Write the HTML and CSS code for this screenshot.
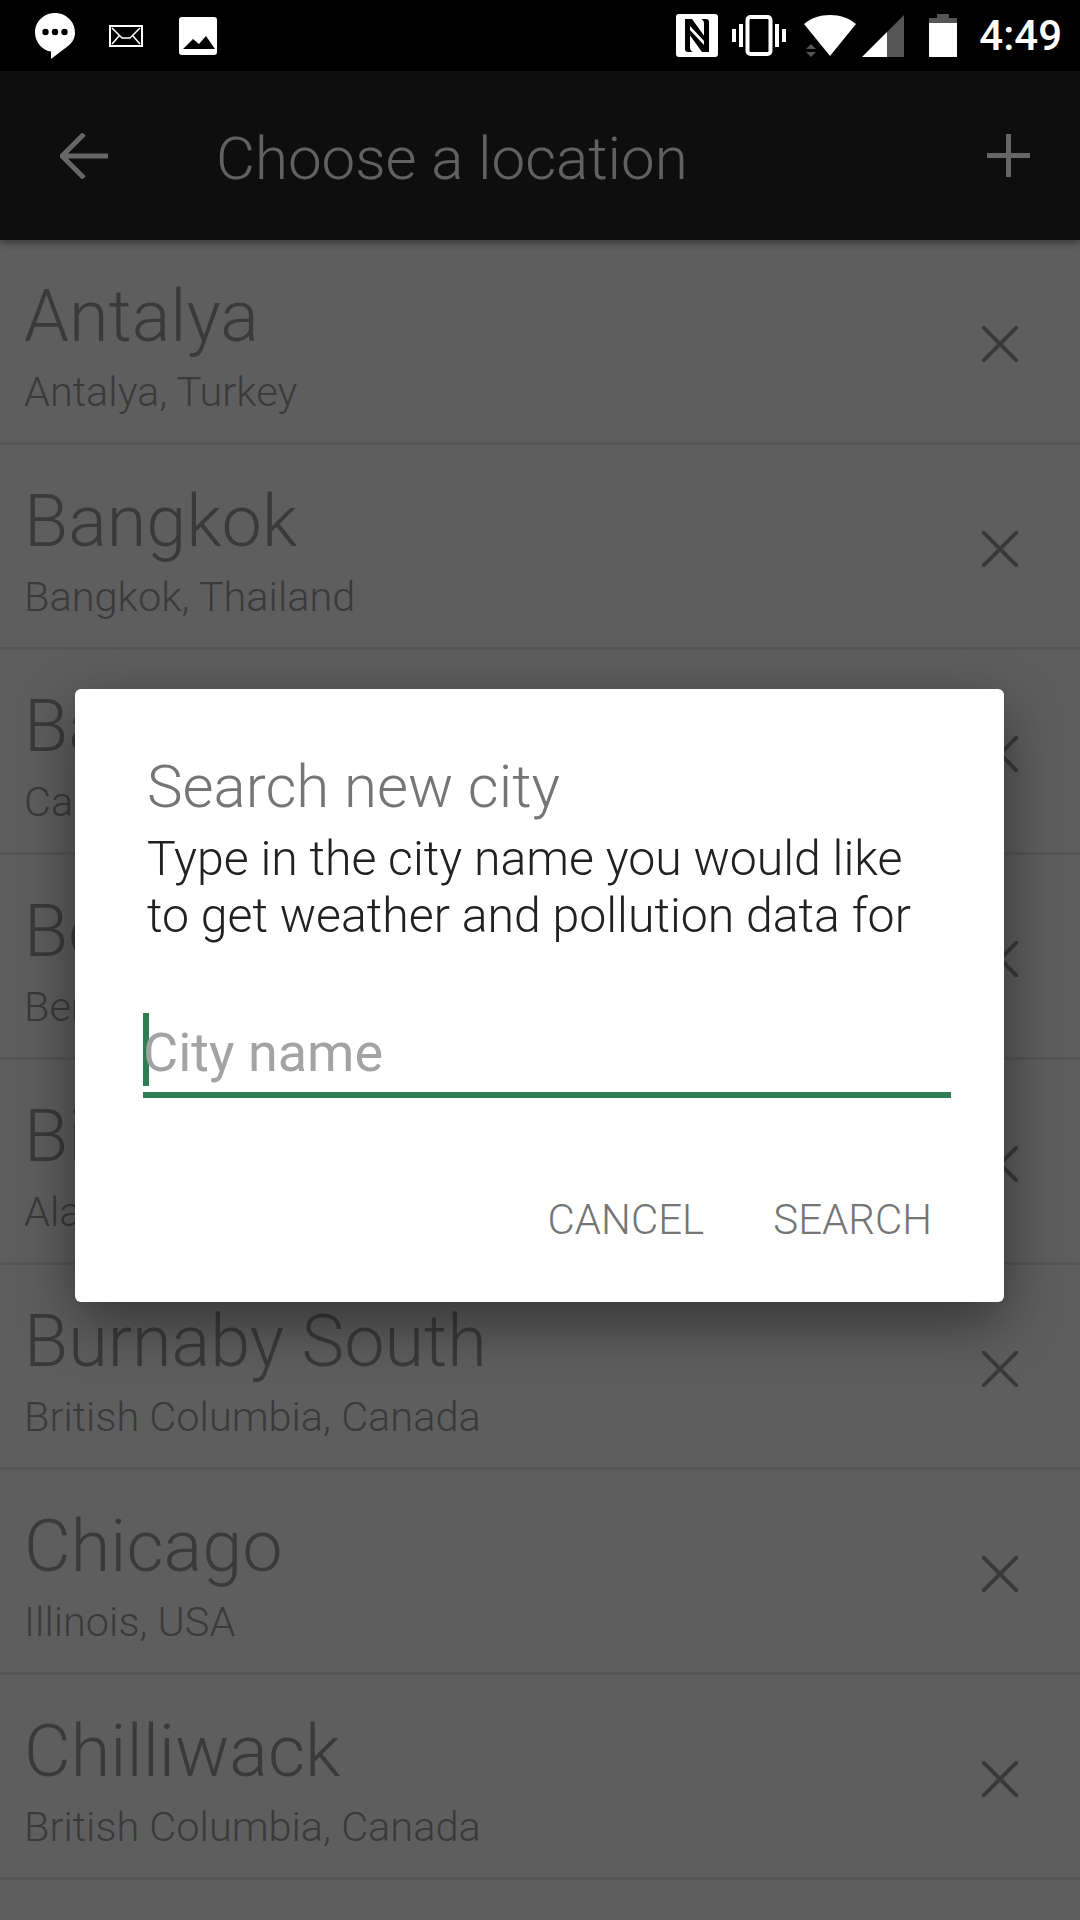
FILE: index.html
```html
<!DOCTYPE html>
<html lang="en">
<head>
<meta charset="UTF-8">
<meta name="viewport" content="width=device-width, initial-scale=1.0">
<title>Choose a location</title>
<link rel="stylesheet" href="styles.css">
</head>
<body>
<div class="statusbar">
    <svg class="ic-chat" width="40" height="46" viewBox="0 0 40 46">
        <path d="M20 0C9 0 0 8.500 0 19.500 0 30 8.500 38 16 38.500V46L33 33C37.500 29.500 40 25 40 19.500 40 8.500 31 0 20 0Z" fill="#fff"/>
        <circle cx="10.500" cy="19" r="3.200"/><circle cx="20" cy="19" r="3.200"/><circle cx="29.500" cy="19" r="3.200"/>
    </svg>
    <svg class="ic-mail" width="34" height="22" viewBox="0 0 34 22">
        <rect x="1" y="1" width="32" height="20" fill="none" stroke="#fff" stroke-width="2"/>
        <path d="M3 3L13 13H21L31 3M3 19L10 11M31 19L24 11" fill="none" stroke="#fff" stroke-width="1.500"/>
    </svg>
    <svg class="ic-image" width="38" height="38" viewBox="0 0 38 38">
        <rect width="38" height="38" rx="3" fill="#fff"/>
        <path d="M4 32L14 22 20 27 27 19 36 32Z"/>
    </svg>
    <div class="status-right">
        <svg class="ic-nfc" width="42" height="43" viewBox="0 0 42 43">
            <rect width="42" height="43" rx="3" fill="#fff"/>
            <path d="M9 5H16L29 23V28L14 12V33C14 36 15 37 17 38H12C10 38 9 37 9 35Z"/>
            <path d="M33 38H26L13 20V15L28 31V10C28 7 27 6 25 5H30C32 5 33 6 33 8Z"/>
        </svg>
        <svg class="ic-vibrate" width="54" height="41" viewBox="0 0 54 41">
            <rect x="15.500" y="2" width="23" height="37" rx="3" fill="none" stroke="#fff" stroke-width="4"/>
            <path d="M0 14h4v13H0zM7 9h4v23H7zM43 9h4v23h-4zM50 14h4v13h-4z" fill="#fff"/>
        </svg>
        <svg class="ic-wifi" width="52" height="42" viewBox="0 0 52 42">
            <path d="M0 9C7 3 16 0 26 0S45 3 52 9L26 41Z" fill="#fff"/>
            <path d="M2 34L7 29 12 34ZM2 37H12L7 42Z" fill="#555"/>
        </svg>
        <svg class="ic-signal" width="42" height="42" viewBox="0 0 42 42">
            <path d="M42 0V42H25V17Z" fill="#555"/>
            <path d="M25 17V42H0Z" fill="#fff"/>
        </svg>
        <svg class="ic-battery" width="28" height="43" viewBox="0 0 28 43">
            <path d="M8 0H20V4H28V9H0V4H8Z" fill="#555"/>
            <rect y="9" width="28" height="34" fill="#fff"/>
        </svg>
        <span class="clock">4:49</span>
    </div>
</div>

<div class="appbar">
    <svg class="back" width="48" height="46" viewBox="0 0 48 46">
        <path d="M48 23H3M24 1L2 23 24 45" fill="none" stroke="currentColor" stroke-width="5"/>
    </svg>
    <h1>Choose a location</h1>
    <svg class="add" width="43" height="43" viewBox="0 0 43 43">
        <path d="M21.500 0V43M0 21.500H43" fill="none" stroke="currentColor" stroke-width="5"/>
    </svg>
</div>

<div class="list">
    <div class="row">
        <div class="place"><div class="city">Antalya</div><div class="region">Antalya, Turkey</div></div>
        <svg class="remove" width="36" height="36" viewBox="0 0 36 36"><path d="M1 1L35 35M35 1L1 35"/></svg>
    </div>
    <div class="row">
        <div class="place"><div class="city">Bangkok</div><div class="region">Bangkok, Thailand</div></div>
        <svg class="remove" width="36" height="36" viewBox="0 0 36 36"><path d="M1 1L35 35M35 1L1 35"/></svg>
    </div>
    <div class="row">
        <div class="place"><div class="city">Bakersfield</div><div class="region">California, USA</div></div>
        <svg class="remove" width="36" height="36" viewBox="0 0 36 36"><path d="M1 1L35 35M35 1L1 35"/></svg>
    </div>
    <div class="row">
        <div class="place"><div class="city">Berlin</div><div class="region">Berlin, Germany</div></div>
        <svg class="remove" width="36" height="36" viewBox="0 0 36 36"><path d="M1 1L35 35M35 1L1 35"/></svg>
    </div>
    <div class="row">
        <div class="place"><div class="city">Birmingham</div><div class="region">Alabama, USA</div></div>
        <svg class="remove" width="36" height="36" viewBox="0 0 36 36"><path d="M1 1L35 35M35 1L1 35"/></svg>
    </div>
    <div class="row">
        <div class="place"><div class="city">Burnaby South</div><div class="region">British Columbia, Canada</div></div>
        <svg class="remove" width="36" height="36" viewBox="0 0 36 36"><path d="M1 1L35 35M35 1L1 35"/></svg>
    </div>
    <div class="row">
        <div class="place"><div class="city">Chicago</div><div class="region">Illinois, USA</div></div>
        <svg class="remove" width="36" height="36" viewBox="0 0 36 36"><path d="M1 1L35 35M35 1L1 35"/></svg>
    </div>
    <div class="row">
        <div class="place"><div class="city">Chilliwack</div><div class="region">British Columbia, Canada</div></div>
        <svg class="remove" width="36" height="36" viewBox="0 0 36 36"><path d="M1 1L35 35M35 1L1 35"/></svg>
    </div>
</div>

<div class="scrim">
    <div class="dialog">
        <h2>Search new city</h2>
        <p>Type in the city name you would like to get weather and pollution data for</p>
        <div class="field"><span class="cursor"></span><span class="placeholder">City name</span></div>
        <div class="actions">
            <button type="button">CANCEL</button>
            <button type="button">SEARCH</button>
        </div>
    </div>
</div>
</body>
</html>
```

FILE: styles.css
```css
* {
    box-sizing: border-box;
}

body {
    position: relative;
    width: 1080px;
    height: 1920px;
    margin: 0;
    overflow: hidden;
    font-family: Roboto, sans-serif;
    background-color: #ebebeb;
}

.statusbar {
    position: relative;
    z-index: 3;
    display: flex;
    align-items: center;
    height: 71px;
    padding-left: 35px;
    background-color: black;
}

.ic-mail {
    margin-left: 34px;
}

.ic-image {
    margin-left: 36px;
}

.status-right {
    display: flex;
    align-items: center;
    margin-left: auto;
    padding-right: 18px;
}

.ic-vibrate {
    margin-left: 14px;
}

.ic-wifi {
    margin-left: 18px;
}

.ic-signal {
    margin-left: 6px;
}

.ic-battery {
    margin-left: 25px;
}

.clock {
    margin-left: 22px;
    color: white;
    font-size: 42px;
    font-weight: 500;
}

.appbar {
    position: relative;
    display: flex;
    align-items: center;
    height: 169px;
    padding: 0 50px 0 60px;
    color: white;
    background-color: #232323;
    box-shadow: 0 3px 8px rgba(0, 0, 0, 0.4);
}

.appbar h1 {
    margin: 5px 0 0 108px;
    font-size: 60px;
    font-weight: 300;
    opacity: 0.95;
}

.add {
    margin-left: auto;
}

.row {
    display: flex;
    align-items: center;
    justify-content: space-between;
    height: 205px;
    padding: 0 62px 0 24px;
    border-bottom: 3px solid #d6d6d6;
}

.place {
    margin-top: 12px;
}

.city {
    font-size: 72px;
    font-weight: 300;
    line-height: 80px;
    color: #919191;
}

.region {
    margin-top: 10px;
    font-size: 41.500px;
    font-weight: 300;
    line-height: 50px;
    color: #919191;
}

.remove {
    margin-top: 6px;
    fill: none;
    stroke: #919191;
    stroke-width: 4;
    stroke-linecap: round;
}

.scrim {
    position: absolute;
    top: 0;
    left: 0;
    z-index: 2;
    width: 100%;
    height: 100%;
    padding: 689px 76px 0 75px;
    background-color: rgba(0, 0, 0, 0.6);
}

.dialog {
    height: 613px;
    padding: 65px 53px 0 72px;
    border-radius: 6px;
    background-color: white;
    box-shadow: 0 20px 60px rgba(0, 0, 0, 0.45);
}

.dialog h2 {
    margin: 0;
    font-size: 60px;
    font-weight: 300;
    line-height: 66px;
    color: #757575;
}

.dialog p {
    margin: 10px 0 0;
    font-size: 48.200px;
    font-weight: 300;
    line-height: 57px;
    color: #212121;
}

.field {
    display: flex;
    align-items: center;
    height: 86px;
    margin: 68px 0 0 -4px;
    border-bottom: 6px solid #2e7d55;
}

.cursor {
    width: 6px;
    height: 73px;
    margin-top: -6px;
    background-color: #2e7d55;
}

.placeholder {
    margin-left: -6px;
    font-size: 54px;
    color: #a3a3a3;
}

.actions {
    display: flex;
    justify-content: flex-end;
    gap: 69px;
    margin-top: 97px;
    padding-right: 19px;
}

.actions button {
    padding: 0;
    border: none;
    background: none;
    font-family: Roboto, sans-serif;
    font-size: 42px;
    font-weight: 300;
    color: #757575;
}
```
